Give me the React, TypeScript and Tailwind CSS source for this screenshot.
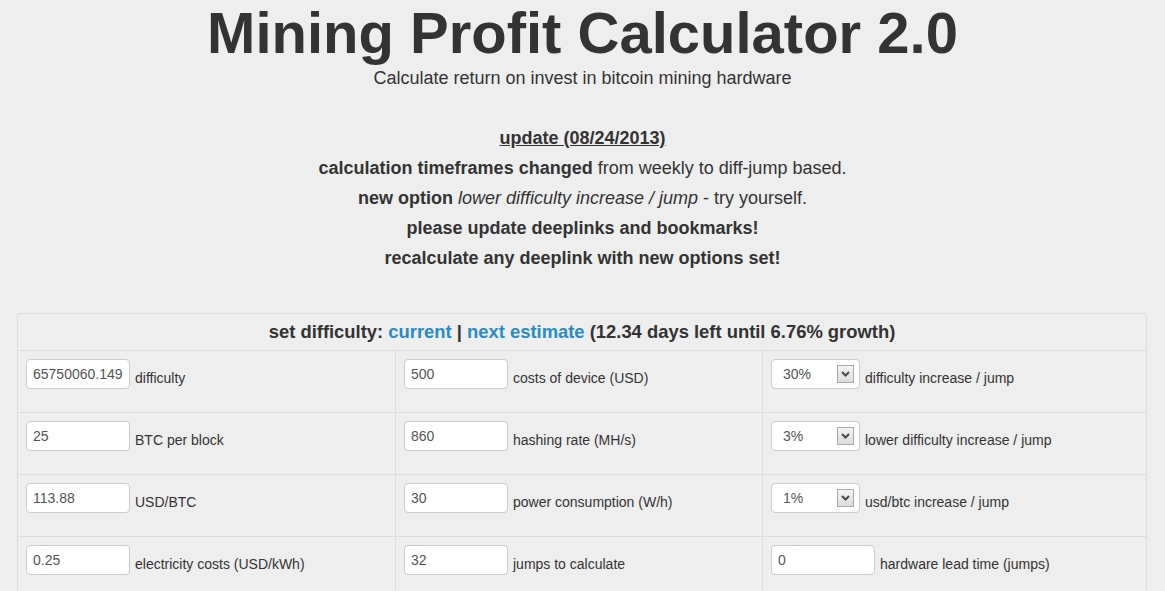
import React from "react";

const font = { fontFamily: '"Liberation Sans", Arial, sans-serif' };

function TextInput({ value, w = "w-[104px]" }: { value: string; w?: string }) {
  return (
    <div
      className={`${w} h-[30px] shrink-0 rounded-[4px] border border-[#cccccc] bg-white pl-[6px] pr-[2px] flex items-center overflow-hidden text-[14px] text-[#555555] whitespace-nowrap`}
    >
      {value}
    </div>
  );
}

function SelectBox({ value }: { value: string }) {
  return (
    <div className="w-[89px] h-[30px] shrink-0 rounded-[4px] border border-[#cccccc] bg-white pl-[11px] pr-[5px] flex items-center justify-between text-[14px] text-[#555555]">
      <span>{value}</span>
      <div className="w-[17px] h-[18px] border border-[#a9a9a9] bg-gradient-to-b from-[#f4f4f4] to-[#dcdcdc] flex items-center justify-center">
        <svg width="9" height="6" viewBox="0 0 9 6">
          <polyline points="1,1 4.5,4.5 8,1" fill="none" stroke="#4a4a4a" strokeWidth="2" />
        </svg>
      </div>
    </div>
  );
}

function Cell({
  control,
  label,
  first,
}: {
  control: React.ReactNode;
  label: string;
  first?: boolean;
}) {
  return (
    <div
      className={`h-[61px] flex items-start pt-[8px] ${first ? "pl-[8px]" : "pl-[8px] border-l border-[#dddddd]"}`}
    >
      {control}
      <span className="pt-[9px] pl-[5px] text-[14px] leading-[20px] text-[#333333] whitespace-nowrap">
        {label}
      </span>
    </div>
  );
}

export default function App() {
  const rows: [React.ReactNode, string, React.ReactNode, string, React.ReactNode, string][] = [
    [<TextInput value="65750060.149" />, "difficulty", <TextInput value="500" />, "costs of device (USD)", <SelectBox value="30%" />, "difficulty increase / jump"],
    [<TextInput value="25" />, "BTC per block", <TextInput value="860" />, "hashing rate (MH/s)", <SelectBox value="3%" />, "lower difficulty increase / jump"],
    [<TextInput value="113.88" />, "USD/BTC", <TextInput value="30" />, "power consumption (W/h)", <SelectBox value="1%" />, "usd/btc increase / jump"],
    [<TextInput value="0.25" />, "electricity costs (USD/kWh)", <TextInput value="32" />, "jumps to calculate", <TextInput value="0" />, "hardware lead time (jumps)"],
  ];

  return (
    <div style={font} className="min-h-[591px] w-[1165px] bg-[#eeeeee] text-[#333333] overflow-hidden">
      <div className="pt-[1px] text-center">
        <h1 className="text-[58px] leading-[64px] font-bold text-[#333333]">
          Mining Profit Calculator 2.0
        </h1>
        <p className="mt-[3px] text-[18px] leading-[20px]">
          Calculate return on invest in bitcoin mining hardware
        </p>
      </div>

      <div className="mt-[35px] text-center text-[18px] leading-[30px]">
        <div className="font-bold underline">update (08/24/2013)</div>
        <div>
          <span className="font-bold">calculation timeframes changed</span> from weekly to diff-jump based.
        </div>
        <div>
          <span className="font-bold">new option</span> <i>lower difficulty increase / jump</i> - try yourself.
        </div>
        <div className="font-bold">please update deeplinks and bookmarks!</div>
        <div className="font-bold">recalculate any deeplink with new options set!</div>
      </div>

      <div className="mt-[40px] ml-[17px] w-[1130px] rounded-[4px] border border-[#dddddd] bg-[#eeeeee]">
        <div className="h-[36px] flex items-center justify-center text-[18.4px] font-bold leading-[36px]">
          <span>set difficulty:&nbsp;</span>
          <span className="text-[#2a8cc2]">current</span>
          <span>&nbsp;|&nbsp;</span>
          <span className="text-[#2a8cc2]">next estimate</span>
          <span>&nbsp;(12.34 days left until 6.76% growth)</span>
        </div>
        {rows.map((r, i) => (
          <div key={i} className="grid grid-cols-[377px_367px_384px] border-t border-[#dddddd]">
            <Cell first control={r[0]} label={r[1]} />
            <Cell control={r[2]} label={r[3]} />
            <Cell control={r[4]} label={r[5]} />
          </div>
        ))}
      </div>
    </div>
  );
}
